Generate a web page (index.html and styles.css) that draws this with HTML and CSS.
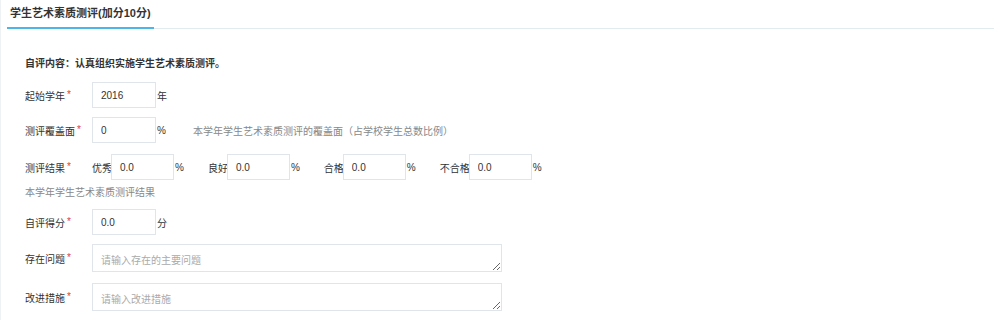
FILE: index.html
```html
<!DOCTYPE html>
<html lang="zh-CN">

<head>
  <meta charset="UTF-8" />
  <title>学生艺术素质测评</title>
  <link rel="stylesheet" href="styles.css">
</head>

<body>
  <div class="page">
    <div class="panel-head">
      <span class="tab">学生艺术素质测评(加分10分)</span>
    </div>

    <div class="form">
      <p class="intro">自评内容：认真组织实施学生艺术素质测评。</p>

      <div class="row">
        <label class="label">起始学年<span class="req">*</span></label>
        <input class="field" type="text" value="2016">
        <span class="unit">年</span>
      </div>

      <div class="row row-cover">
        <label class="label">测评覆盖面<span class="req">*</span></label>
        <input class="field" type="text" value="0">
        <span class="unit">%</span>
        <span class="hint hint-inline">本学年学生艺术素质测评的覆盖面（占学校学生总数比例）</span>
      </div>

      <div class="row row-result">
        <label class="label">测评结果<span class="req">*</span></label>
        <div class="group">
          <span class="sub">优秀</span>
          <input class="field field-small" type="text" value="0.0">
          <span class="unit">%</span>
        </div>
        <div class="group">
          <span class="sub">良好</span>
          <input class="field field-small" type="text" value="0.0">
          <span class="unit">%</span>
        </div>
        <div class="group">
          <span class="sub">合格</span>
          <input class="field field-small" type="text" value="0.0">
          <span class="unit">%</span>
        </div>
        <div class="group">
          <span class="sub">不合格</span>
          <input class="field field-small" type="text" value="0.0">
          <span class="unit">%</span>
        </div>
      </div>
      <p class="hint hint-block">本学年学生艺术素质测评结果</p>

      <div class="row">
        <label class="label">自评得分<span class="req">*</span></label>
        <input class="field" type="text" value="0.0">
        <span class="unit">分</span>
      </div>

      <div class="row row-text">
        <label class="label">存在问题<span class="req">*</span></label>
        <textarea class="area" placeholder="请输入存在的主要问题"></textarea>
      </div>

      <div class="row row-text">
        <label class="label">改进措施<span class="req">*</span></label>
        <textarea class="area" placeholder="请输入改进措施"></textarea>
      </div>
    </div>
  </div>
</body>

</html>
```

FILE: styles.css
```css
body {
  margin: 0;
  background-color: white;
  color: #333;
  font-family: "Liberation Sans", "Noto Sans CJK SC", sans-serif;
  font-size: 10px;
}

.page {
  min-height: 320px;
  border-left: 1px solid #eef2f5;
  padding: 0 6px;
}

/* Header with tab */
.panel-head {
  height: 28px;
  border-bottom: 1px solid #e2ebf0;
}

.tab {
  display: inline-block;
  padding: 0 3px;
  line-height: 27px;
  font-size: 11px;
  font-weight: 700;
  color: #333;
  border-bottom: 2px solid #4db6e6;
}

/* Form */
.form {
  padding-left: 18px;
}

.intro {
  margin: 28px 0 11px;
  line-height: 14px;
  font-weight: 700;
}

.row {
  display: flex;
  align-items: center;
  margin-bottom: 9px;
}

.row-result {
  margin-top: 11px;
  margin-bottom: 0;
}

.label {
  width: 67px;
  flex-shrink: 0;
  color: #333;
}

.req {
  color: #e4393c;
  margin-left: 2px;
  position: relative;
  top: -2px;
}

.field {
  box-sizing: border-box;
  width: 64px;
  height: 26px;
  padding: 0 8px;
  border: 1px solid #dfe5ea;
  border-radius: 0;
  font-family: inherit;
  font-size: 10px;
  color: #333;
  outline: none;
}

.field-small {
  width: 63px;
}

.unit {
  margin-left: 1px;
}

.group {
  display: flex;
  align-items: center;
  margin-right: 24px;
}

.sub {
  margin-right: -1px;
}

.hint {
  color: #888;
}

.hint-inline {
  margin-left: 27px;
}

.hint-block {
  margin: 6px 0 9px;
  line-height: 14px;
}

.row-text {
  margin-bottom: 11px;
}

.area {
  box-sizing: border-box;
  width: 410px;
  height: 28px;
  padding: 9px 8px 0;
  border: 1px solid #dfe5ea;
  border-radius: 0;
  font-family: inherit;
  font-size: 10px;
  line-height: 14px;
  color: #333;
  outline: none;
}

.area::placeholder {
  color: #aaa;
}
```
